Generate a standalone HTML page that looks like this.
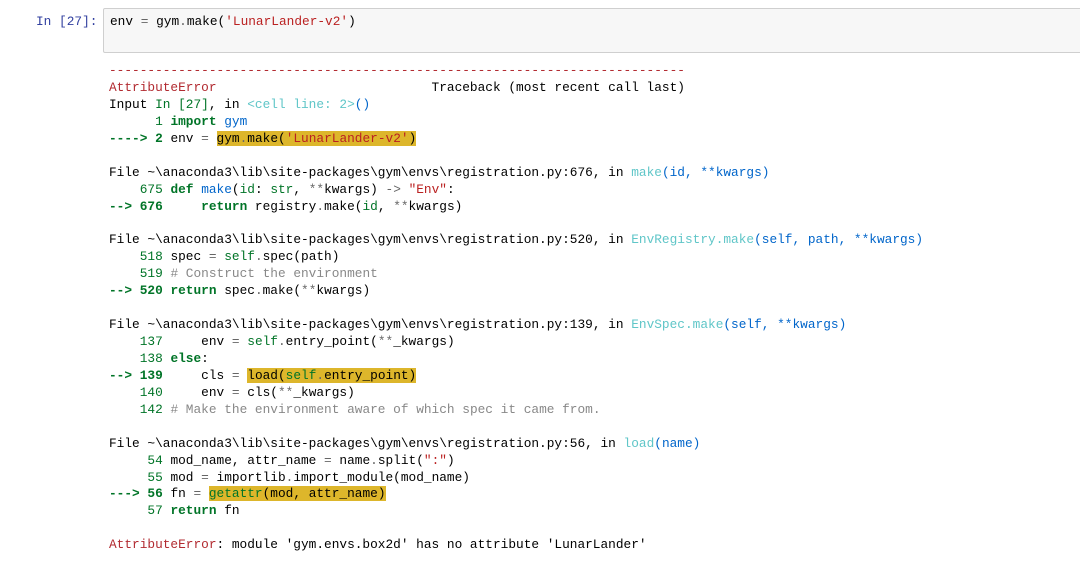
<!DOCTYPE html>
<html><head><meta charset="utf-8"><style>
body{margin:0;background:#fff;width:1080px;height:575px;overflow:hidden;font-family:"Liberation Mono",monospace;font-size:12.8px;}
.p{position:absolute;left:36px;top:14px;color:#303f9f;font-size:12.8px;}
.in{position:absolute;left:103px;top:8px;width:990px;height:45px;background:#f7f7f7;border:1px solid #cfcfcf;border-radius:2px;box-sizing:border-box;}
.in pre{margin:0;position:absolute;left:6px;top:5px;}
pre{font-family:"Liberation Mono",monospace;font-size:12.8px;line-height:16.93px;margin:0;color:#000;}
.out{position:absolute;left:109px;top:63px;}
.r{color:#b22b31}.g{color:#007427}.gb{color:#007427;font-weight:bold}.c{color:#60c6c8}.b{color:#0065ca}.bl{color:#0065ca}
.h{background:#ddb62b}.k{}.gr{color:#888}.o{color:#666}.s{color:#ba2121}
</style></head><body>
<div class="p">In [27]:</div>
<div class="in"><pre>env <span class="o">=</span> gym<span class="o">.</span>make(<span class="s">'LunarLander-v2'</span>)</pre></div>
<pre class="out"><span class="r">---------------------------------------------------------------------------</span>
<span class="r">AttributeError</span>                            Traceback (most recent call last)
Input <span class="g">In [27]</span>, in <span class="c">&lt;cell line: 2&gt;</span><span class="bl">()</span>
<span class="g">      1</span> <span class="gb">import</span> <span class="bl">gym</span>
<span class="gb">----&gt; 2</span> env <span class="o">=</span> <span class="h">gym<span class="o">.</span>make(<span class="s">'LunarLander-v2'</span>)</span>

File <span class="k">~\anaconda3\lib\site-packages\gym\envs\registration.py:676</span>, in <span class="c">make</span><span class="b">(id, **kwargs)</span>
<span class="g">    675</span> <span class="gb">def</span> <span class="bl">make</span>(<span class="g">id</span>: <span class="g">str</span>, <span class="o">**</span>kwargs) <span class="o">-&gt;</span> <span class="s">"Env"</span>:
<span class="gb">--&gt; 676</span>     <span class="gb">return</span> registry<span class="o">.</span>make(<span class="g">id</span>, <span class="o">**</span>kwargs)

File <span class="k">~\anaconda3\lib\site-packages\gym\envs\registration.py:520</span>, in <span class="c">EnvRegistry.make</span><span class="b">(self, path, **kwargs)</span>
<span class="g">    518</span> spec <span class="o">=</span> <span class="g">self</span><span class="o">.</span>spec(path)
<span class="g">    519</span> <span class="gr"># Construct the environment</span>
<span class="gb">--&gt; 520</span> <span class="gb">return</span> spec<span class="o">.</span>make(<span class="o">**</span>kwargs)

File <span class="k">~\anaconda3\lib\site-packages\gym\envs\registration.py:139</span>, in <span class="c">EnvSpec.make</span><span class="b">(self, **kwargs)</span>
<span class="g">    137</span>     env <span class="o">=</span> <span class="g">self</span><span class="o">.</span>entry_point(<span class="o">**</span>_kwargs)
<span class="g">    138</span> <span class="gb">else</span>:
<span class="gb">--&gt; 139</span>     cls <span class="o">=</span> <span class="h">load(<span class="g">self</span><span class="o">.</span>entry_point)</span>
<span class="g">    140</span>     env <span class="o">=</span> cls(<span class="o">**</span>_kwargs)
<span class="g">    142</span> <span class="gr"># Make the environment aware of which spec it came from.</span>

File <span class="k">~\anaconda3\lib\site-packages\gym\envs\registration.py:56</span>, in <span class="c">load</span><span class="b">(name)</span>
<span class="g">     54</span> mod_name, attr_name <span class="o">=</span> name<span class="o">.</span>split(<span class="s">":"</span>)
<span class="g">     55</span> mod <span class="o">=</span> importlib<span class="o">.</span>import_module(mod_name)
<span class="gb">---&gt; 56</span> fn <span class="o">=</span> <span class="h"><span class="g">getattr</span>(mod, attr_name)</span>
<span class="g">     57</span> <span class="gb">return</span> fn

<span class="r">AttributeError</span>: module 'gym.envs.box2d' has no attribute 'LunarLander'</pre>
</body></html>
